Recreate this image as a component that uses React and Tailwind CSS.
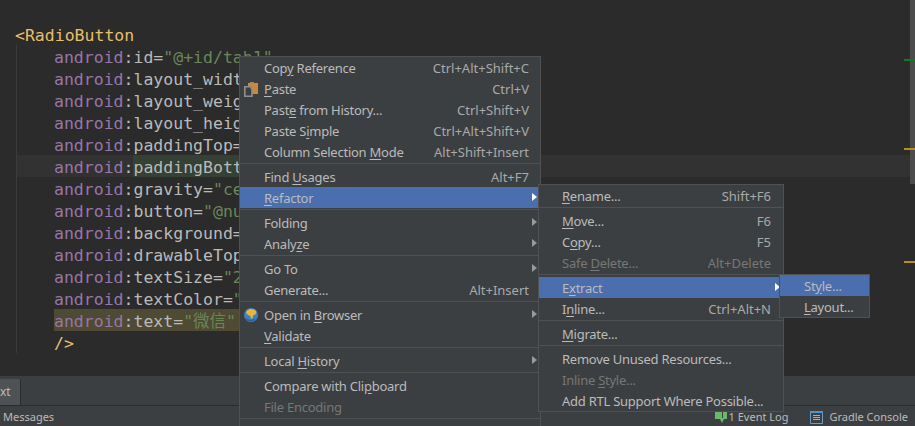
import React from 'react';

const mainMenu = [
  { name: 'Copy Reference', u: 3, key: 'Ctrl+Alt+Shift+C' },
  { name: 'Paste', u: 0, key: 'Ctrl+V', icon: 'paste' },
  { name: 'Paste from History...', u: 4, key: 'Ctrl+Shift+V' },
  { name: 'Paste Simple', u: 7, key: 'Ctrl+Alt+Shift+V' },
  { name: 'Column Selection Mode', u: 17, key: 'Alt+Shift+Insert' },
  { sep: true },
  { name: 'Find Usages', u: 5, key: 'Alt+F7' },
  { name: 'Refactor', u: 0, arrow: true, active: true },
  { sep: true },
  { name: 'Folding', arrow: true },
  { name: 'Analyze', u: 5, arrow: true },
  { sep: true },
  { name: 'Go To', arrow: true },
  { name: 'Generate...', key: 'Alt+Insert' },
  { sep: true },
  { name: 'Open in Browser', u: 8, arrow: true, icon: 'globe' },
  { name: 'Validate', u: 0 },
  { sep: true },
  { name: 'Local History', u: 6, arrow: true },
  { sep: true },
  { name: 'Compare with Clipboard', u: 16 },
  { name: 'File Encoding', disabled: true },
  { sep: true },
  { name: '' },
];

const refactorMenu = [
  { name: 'Rename...', u: 0, key: 'Shift+F6' },
  { sep: true },
  { name: 'Move...', u: 0, key: 'F6' },
  { name: 'Copy...', u: 1, key: 'F5' },
  { name: 'Safe Delete...', u: 5, key: 'Alt+Delete', disabled: true },
  { sep: true },
  { name: 'Extract', u: 1, arrow: true, active: true },
  { name: 'Inline...', u: 1, key: 'Ctrl+Alt+N' },
  { sep: true },
  { name: 'Migrate...', u: 0 },
  { sep: true },
  { name: 'Remove Unused Resources...' },
  { name: 'Inline Style...', u: 7, disabled: true },
  { name: 'Add RTL Support Where Possible...' },
];

const extractMenu = [
  { name: 'Style...', u: 2, active: true },
  { name: 'Layout...', u: 0 },
];

const codeLines = [
  { attr: 'id=', str: '"@+id/tab1"' },
  { attr: 'layout_width' },
  { attr: 'layout_weight' },
  { attr: 'layout_height' },
  { attr: 'paddingTop=' },
  { attr: 'paddingBottom', current: true },
  { attr: 'gravity=', str: '"ce' },
  { attr: 'button=', str: '"@nu' },
  { attr: 'background=' },
  { attr: 'drawableTop' },
  { attr: 'textSize=', str: '"2' },
  { attr: 'textColor=', str: '"' },
  { attr: 'text=', str: '"微信"', marked: true },
];

const PasteIcon = () => (
  <svg width="14" height="16" viewBox="0 0 14 16" className="absolute left-[4px] top-[3px]">
    <path d="M4 2h2V1h4v1h4v11H8V6H4z" fill="#c8893c" />
    <path d="M6 1h4v2H6z" fill="#a08a6a" />
    <path d="M.8 5.800H6L8 8v7.200H.8z" fill="#3c3f41" stroke="#8f8f8f" strokeWidth="1.600" />
  </svg>
);

const GlobeIcon = () => (
  <svg width="14" height="14" viewBox="0 0 14 14" className="absolute left-[4px] top-[4px]">
    <circle cx="7" cy="7" r="7" fill="#3f7fc4" />
    <path d="M3 2.500 6 1l4.500.5 2 2.500-1 2.500-2 .5-1 3-1.500 1-.5-3-2.500-1L2 5z" fill="#e8b63e" />
    <path d="M1 9c2 3 7 4 11 1-2 4-9 5-11-1z" fill="#2a5f9e" />
  </svg>
);

const Label = ({ name, u }) => {
  if (u === undefined) return <span className="tracking-[-0.25px]">{name}</span>;
  return (
    <span className="tracking-[-0.25px]">
      {name.slice(0, u)}
      <u className="underline-offset-2">{name[u]}</u>
      {name.slice(u + 1)}
    </span>
  );
};

const MenuList = ({ items, textPad, keyPad, className }) => (
  <div className={`absolute bg-[#3c3f41] border border-[#515151] text-[13px] text-[#bbbbbb] ${className}`}>
    {items.map((item, i) =>
      item.sep ? (
        <div key={i} className="h-[4px] pt-px">
          <div className="h-px w-full bg-[#515151]" />
        </div>
      ) : (
        <div
          key={i}
          className={`relative h-[21px] pt-[2px] flex items-center justify-between whitespace-nowrap ${textPad} ${keyPad} ${
            item.active ? 'bg-[#4b6eaf]' : ''
          } ${item.disabled ? 'text-[#777777]' : ''}`}
        >
          {item.icon === 'paste' && <PasteIcon />}
          {item.icon === 'globe' && <GlobeIcon />}
          <Label name={item.name} u={item.u} />
          {item.key && <span className={item.disabled ? 'text-[#777777]' : 'text-[#a9a9a9]'}>{item.key}</span>}
          {item.arrow && (
            <span
              className={`absolute right-[3px] top-[6px] w-0 h-0 border-y-[4px] border-y-transparent border-l-[5px] ${
                item.active ? 'border-l-white' : 'border-l-[#9a9a9a]'
              }`}
            />
          )}
        </div>
      )
    )}
  </div>
);

const App = () => {
  return (
    <div
      className="relative w-[915px] h-[426px] overflow-hidden flex flex-col bg-[#3c3f41] text-[#bbbbbb]"
      style={{ fontFamily: '"Noto Sans", "Noto Sans CJK SC", sans-serif' }}
    >
      {/* editor */}
      <div
        className="relative h-[376px] shrink-0 bg-[#2b2b2b] pt-[23px] text-[16.5px] leading-[22px] text-[#bababa]"
        style={{ fontFamily: '"DejaVu Sans Mono", "Noto Sans CJK SC", monospace' }}
      >
        <div className="pl-[15px] pt-[2px] text-[#e8bf6a] h-[22px]">&lt;RadioButton</div>
        <div className="ml-[16px] border-l border-[#3b3b3b]">
          {codeLines.map((line) => (
            <div key={line.attr} className={`h-[22px] flex pl-[37px] ${line.current ? 'bg-[#323232]' : ''}`}>
              <div className={`flex whitespace-pre pt-[2px] ${line.marked ? 'bg-[#4f4a33] w-[186px]' : ''}`}>
                <span className="text-[#9876aa]">android</span>
                <span>:</span>
                <span className={line.current ? 'bg-[#344134] -mt-[2px] pt-[2px]' : ''}>{line.attr}</span>
                {line.str && <span className="text-[#6a8759]">{line.str}</span>}
              </div>
            </div>
          ))}
          <div className="h-[22px] pl-[37px] pt-[2px] text-[#e8bf6a]">/&gt;</div>
        </div>
        {/* scrollbar and error stripes */}
        <div className="absolute right-0 top-0 w-[5px] h-[184px] bg-[#4c4c4c]" />
        <div className="absolute right-0 top-[59px] w-[11px] h-[2px] bg-[#0f7a1f]" />
        <div className="absolute right-0 top-[148px] w-[11px] h-[2px] bg-[#b89020]" />
        <div className="absolute right-0 top-[261px] w-[11px] h-[2px] bg-[#b89020]" />
      </div>

      {/* tool window tabs */}
      <div className="mt-[3px] h-[27px] flex border-b border-[#2b2b2b]">
        <div className="w-[21px] bg-[#4e5254] border-r border-[#2b2b2b] text-[12px] leading-[26px] pr-[11px] text-right">xt</div>
      </div>

      {/* status bar */}
      <div className="h-[20px] flex items-center text-[11px] pt-[3px] pl-[3px] pr-[7px]">
        <span>Messages</span>
        <div className="ml-auto flex items-center">
          <svg width="12" height="11" viewBox="0 0 12 11">
            <path d="M0 0h12v7H9l-2 4-2-4H0z" fill="#6ab96a" />
            <path d="M7 0h1v6H7z" fill="#3c3f41" />
          </svg>
          <span className="mr-[3px] ml-[1px]">1</span>
          <span>Event Log</span>
          <svg width="13" height="13" viewBox="0 0 13 13" className="ml-[22px] mr-[6px]">
            <path d="M0.500 1.500h12v11h-12z" fill="none" stroke="#6a9cc4" />
            <path d="M0 0h13v2H0z" fill="#4f94cc" />
            <path d="M3 4h7v1H3zM3 6h7v1H3zM3 8h7v1H3z" fill="#8fb4d0" />
          </svg>
          <span>Gradle Console</span>
        </div>
      </div>

      {/* context menus */}
      <MenuList items={mainMenu} textPad="pl-[24px]" keyPad="pr-[11px]" className="left-[239px] top-[56px] w-[302px]" />
      <MenuList items={refactorMenu} textPad="pl-[23px]" keyPad="pr-[12px]" className="left-[538px] top-[184px] w-[246px]" />
      <MenuList items={extractMenu} textPad="pl-[24px]" keyPad="pr-[11px]" className="left-[779px] top-[274px] w-[91px]" />
    </div>
  );
};

export default App;
